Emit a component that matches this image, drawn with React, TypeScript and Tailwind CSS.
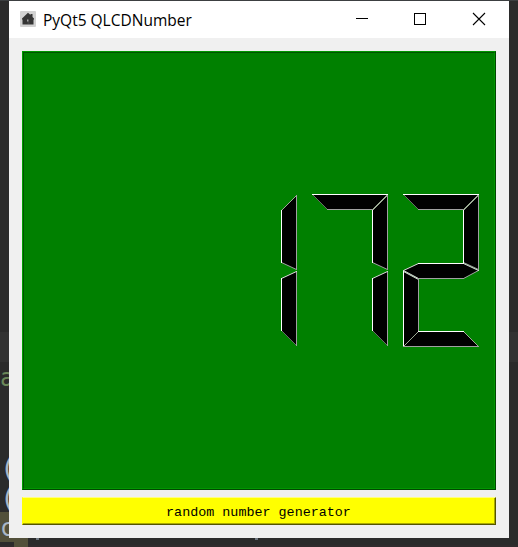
type Edge = [number, number, number, number, string];
type Segment = { points: string; edges: Edge[] };

const LIGHT = '#ffffff';
const MID = '#a0a0a0';
const DARK = '#666666';
const SOFT = '#dcdcdc';
const SAGE = '#9caa94';

const segments: Record<string, Segment> = {
  top: {
    points: '0,0 75,0 60,15 15,15',
    edges: [[0, 0, 15, 15, DARK], [15, 15, 60, 15, MID], [60, 15, 75, 0, SAGE], [0, 0, 75, 0, LIGHT]],
  },
  upperRight: {
    points: '75,1 75,75 60,68 60,16',
    edges: [[60, 16, 75, 1, SAGE], [60, 68, 75, 75, MID], [75, 1, 75, 75, MID], [60, 16, 60, 68, LIGHT]],
  },
  lowerRight: {
    points: '75,77 75,151 60,136 60,84',
    edges: [[60, 136, 75, 151, DARK], [75, 77, 75, 151, MID], [60, 84, 75, 77, SOFT], [60, 84, 60, 136, LIGHT]],
  },
  middle: {
    points: '0,76 15,69 60,69 75,76 60,84 15,84',
    edges: [[0, 76, 15, 84, SOFT], [15, 84, 60, 84, MID], [60, 84, 75, 76, MID], [60, 69, 75, 76, SOFT], [0, 76, 15, 69, SOFT], [15, 69, 60, 69, LIGHT]],
  },
  lowerLeft: {
    points: '0,77 15,85 15,137 0,152',
    edges: [[0, 77, 15, 85, SOFT], [15, 85, 15, 137, MID], [15, 137, 0, 152, SAGE], [0, 77, 0, 152, LIGHT]],
  },
  bottom: {
    points: '0,152 15,137 60,137 75,152',
    edges: [[0, 152, 15, 137, SAGE], [60, 137, 75, 152, SAGE], [0, 152, 75, 152, MID], [15, 137, 60, 137, LIGHT]],
  },
};

const digits = [
  { x: 0, parts: ['upperRight', 'lowerRight'] },
  { x: 91, parts: ['top', 'upperRight', 'lowerRight'] },
  { x: 182, parts: ['top', 'upperRight', 'middle', 'lowerLeft', 'bottom'] },
];

function Lcd() {
  return (
    <div className="h-[439px] border border-t-[#009600] border-l-[#00a000] border-r-[#004800] border-b-[#004800]">
      <div className="flex h-full items-start justify-end border border-t-[#005500] border-l-[#005500] border-r-[#009600] border-b-[#009600] bg-[#008000] pt-[141px] pr-[14px]">
        <svg width="259" height="154" viewBox="0 0 259 154" shapeRendering="crispEdges">
          {digits.map((d) => (
            <g key={d.x} transform={`translate(${d.x + 0.5} 0.5)`}>
              {d.parts.map((name) => (
                <g key={name}>
                  <polygon points={segments[name].points} fill="#000" />
                  {segments[name].edges.map(([x1, y1, x2, y2, c], i) => (
                    <line
                      key={i}
                      x1={x1}
                      y1={y1}
                      x2={x2}
                      y2={y2}
                      stroke={c}
                      strokeWidth="1"
                      strokeLinecap="square"
                      shapeRendering={x1 === x2 || y1 === y2 ? 'crispEdges' : 'auto'}
                    />
                  ))}
                </g>
              ))}
            </g>
          ))}
        </svg>
      </div>
    </div>
  );
}

function TitleBar() {
  return (
    <div className="flex h-[37px] items-center bg-white pl-[11px] text-black">
      <svg width="16" height="16" viewBox="0 0 16 16" className="mb-px shrink-0">
        <rect width="16" height="16" rx="1" fill="#d2d2d2" />
        <path d="M8 1.8L10.5 4V3H12.5V6L14 7.6V8.5H13.5V13.5H2.5V8.5H2V7.6Z" fill="#353535" />
        <path d="M7.5 10.5H9.5V13H7.5Z" fill="#444" />
        <path d="M7 8.5H8.5V10.5H7Z" fill="#a5a5a5" />
      </svg>
      <span className="ml-[7px] flex-1 font-['Open_Sans','Noto_Sans',sans-serif] text-[15.5px] leading-5 whitespace-nowrap">
        PyQt5 QLCDNumber
      </span>
      <svg width="153" height="37" viewBox="0 0 153 37" fill="none" stroke="#000" className="shrink-0">
        <path d="M0 17.5H12" />
        <rect x="58.5" y="12.5" width="11" height="11" />
        <path d="M117 12L129 24M129 12L117 24" strokeWidth="1.1" />
      </svg>
    </div>
  );
}

function EditorBackdrop() {
  return (
    <div className="flex h-full flex-col border-t border-[#3c3f41] bg-[#2b2b2b] font-['DejaVu_Sans_Mono',monospace] text-[24px] leading-[30px] text-[#a9b7c6]">
      <div className="h-[331px]" />
      <div className="h-[30px] bg-[#323232]" />
      <div className="h-[90px] pt-px text-[#6a8759]">a</div>
      <div className="h-[30px] pt-px text-[27px]">(</div>
      <div className="h-[30px] pt-px text-[27px]">(</div>
      <div className="flex h-[30px]">
        <div className="w-7 bg-[#52503a] pt-px">c</div>
        <div className="flex h-[28px] flex-1 items-end pl-2">
          <span className="h-[2px] w-[3px] bg-[#6e7780]" />
          <span className="ml-[216px] h-[2px] w-[3px] bg-[#6e7780]" />
        </div>
      </div>
      <div className="flex h-[5px] items-stretch border-b-2 border-[#302b2d] pl-[14px]">
        <div className="-mb-[2px] w-[14px] bg-[#52503a]" />
      </div>
    </div>
  );
}

export default function App() {
  return (
    <div className="relative h-[547px] w-[518px] overflow-hidden">
      <EditorBackdrop />
      <div className="absolute top-px left-[9px] flex h-[537px] w-[500px] flex-col bg-[#f0f0f0]">
        <TitleBar />
        <div className="flex flex-col gap-[7px] px-[13px] pt-[13px]">
          <Lcd />
          <button className="h-[28px] border border-t-[#ffff80] border-l-[#ffff00] border-r-[#555500] border-b-[#555500]">
            <span className="flex h-full items-center justify-center border-r border-b border-[#aaaa00] bg-[#ffff00] pt-[5px] font-['Liberation_Mono',monospace] text-[13.4px] leading-4 whitespace-pre text-black">
              random number generator
            </span>
          </button>
        </div>
      </div>
    </div>
  );
}
